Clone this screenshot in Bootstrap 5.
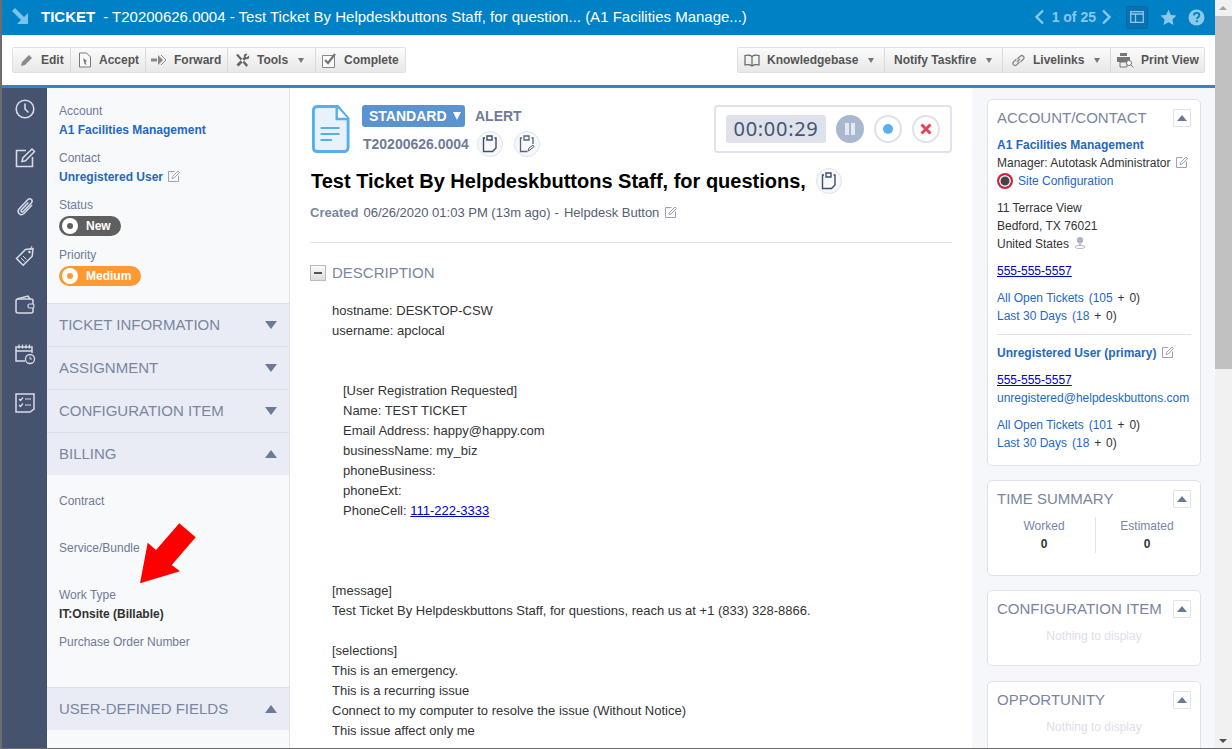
<!DOCTYPE html>
<html lang="en"><head><meta charset="utf-8"><title>Ticket</title>
<link href="https://cdn.jsdelivr.net/npm/bootstrap@5.3.0/dist/css/bootstrap.min.css" rel="stylesheet">
<style>
html,body{height:100%;overflow:hidden}
body{font:12px/18px "Liberation Sans",Arial,sans-serif;background:#6d6d6d;color:#333;padding-left:2px}
.shell{width:1230px;height:748px;position:relative;overflow:hidden}
.pagecol{width:1213px;height:100%;background:#fff}
.scrollcol{width:17px;background:#f1f1f1;position:relative}
.sc-thumb{background:#c1c1c1;height:353px;margin-top:16px}
.sc-up,.sc-dn{position:absolute;left:4px;width:0;height:0;border-left:4px solid transparent;border-right:4px solid transparent}
.sc-up{top:6px;border-bottom:4px solid #a3a3a3}.sc-dn{bottom:5px;border-top:4px solid #505050}
.titlebar{height:35px;background:#0081c6;color:#fff;font-size:15px;padding-bottom:1px}
.titlebar svg{display:block}
.tb-arrow{margin-left:10px;margin-right:11px}
.tb-name{font-weight:700;font-size:15px;margin-right:8px}
.tb-count{color:#8cc8ec;font-weight:700;font-size:14px;margin:0 5px 0 7px}
.layout-box{width:22px;height:23px;background:#0a72b0;border:1px solid #0a6aa5;border-radius:2px;margin:0 12px 0 15px}
.tb-help{margin-left:11px}
.tb-right{margin-right:10px}
.toolbar{height:53px;background:#fff;border-bottom:3px solid #2a85d6;padding:0 10px}
.tool-group.btn-group{height:26px;border:1px solid #e0e0e0;border-radius:2px;display:flex}
.tool-group.btn-group>.tool.btn{margin-left:0;flex:none;height:24px;background:linear-gradient(#fbfbfb,#e8e8e8);border:0;border-right:1px solid #d9d9d9;border-radius:0;padding:0 0 0 7px;font:700 12px/24px "Liberation Sans",Arial,sans-serif;color:#555;display:flex;align-items:center;justify-content:flex-start;gap:7px}
.tool-group.btn-group>.tool.btn:last-child{border-right:0}
.caret-mini{width:0;height:0;border-left:3.5px solid transparent;border-right:3.5px solid transparent;border-top:5px solid #777;margin-left:3px}
.tool-group.btn-group>.tool.btn.w-edit{width:58px}
.tool-group.btn-group>.tool.btn.w-accept{width:75px}
.tool-group.btn-group>.tool.btn.w-forward{width:82px;padding-left:5px}
.tool-group.btn-group>.tool.btn.w-tools{width:88px}
.tool-group.btn-group>.tool.btn.w-complete{width:89px;padding-left:6px}
.tool-group.btn-group>.tool.btn.w-know{width:147px;padding-left:6px}
.tool-group.btn-group>.tool.btn.w-notify{width:118px;padding-left:9px}
.tool-group.btn-group>.tool.btn.w-live{width:108px;padding-left:8px}
.tool-group.btn-group>.tool.btn.w-print{width:93px;padding-left:6px}
.workspace{height:660px;overflow:hidden}
.iconrail{width:45px;background:#46536f;padding-top:10px;flex:none}
.iconrail svg{display:block;margin:0 auto 27px;width:22px;height:22px}
.leftpanel{width:243px;flex:none;background:#f8f9fb;border-right:1px solid #e2e4ea;color:#6f7b98}
.field-top{padding:14px 12px 0;height:215px}
.lbl{color:#6f7b98;height:19px;line-height:19px}
.val{height:19px;line-height:19px;margin-bottom:9px}
.acct{color:#2468c4;font-weight:700}
.pill{height:20px;border-radius:10px;color:#fff;font-weight:700;display:inline-flex;align-items:center;margin:1px 0 0;padding-left:3px;line-height:20px}
.pill-dot{width:16px;height:16px;border-radius:50%;background:#fff;display:flex;align-items:center;justify-content:center;margin-right:8px}
.pill-dot i{width:6px;height:6px;border-radius:50%;display:block}
.pill-new{background:#5f5f5f;width:62px}.pill-new i{background:#5f5f5f}
.pill-med{background:#ff9a33;width:82px}.pill-med i{background:#ff9a33}
.statusbox{height:31px}
.sec-head{height:43px;background:#e9ecf4;border-top:1px solid #dcdfe8;padding:0 12px;font-size:15px;color:#7a86a0;display:flex;align-items:center;justify-content:space-between}
.tri-d,.tri-u{width:0;height:0;border-left:6.5px solid transparent;border-right:6.5px solid transparent}
.tri-d{border-top:8px solid #6b7a98}.tri-u{border-bottom:8px solid #6b7a98}
.billing{padding:17px 12px 0;height:212px}
.billing .fld{height:47px}
.billing .strong{color:#333;font-weight:700;height:19px;line-height:19px}
.centerpanel{width:682px;flex:none;padding:17px 20px 0;background:#fff}
.doc-ico{width:38px;height:48px;flex:none;margin-left:2px}
.hd-info{margin-left:12px}
.hd-top{height:52px}
.badge-std{background:#5a93cf;color:#fff;font-weight:700;font-size:14px;height:22px;line-height:22px;width:103px;border-radius:3px;padding-left:7px;display:flex;align-items:center}
.badge-tri{width:0;height:0;border-left:4.5px solid transparent;border-right:4.5px solid transparent;border-top:8px solid #fff;margin-left:6px}
.alert-lbl{color:#6f7b98;font-weight:700;font-size:14px;margin-left:10px;line-height:22px}
.tnum-row{margin-top:4px;height:26px}
.tnum{color:#6f7b98;font-weight:700;font-size:14px;width:115px;padding-left:1px}
.circ{width:26px;height:26px;border-radius:50%;border:1px solid #dfe2ea;background:#f7f8fa;display:flex;align-items:center;justify-content:center;margin-right:11px}
.circ-last{margin-right:0}
.timerbox{width:238px;height:48px;border:2px solid #e0e3eb;border-radius:4px;padding:8px 10px;gap:10px;margin-left:auto}
.clock{width:100px;height:28px;background:#dfe2ea;border-radius:3px;font:20px/28px "Noto Sans","Open Sans",sans-serif;color:#445571;text-align:center;letter-spacing:.7px}
.tcirc{width:28px;height:28px;border-radius:50%;display:flex;align-items:center;justify-content:center}
.tc-pause{background:#a9b7cf}.tc-ring{border:2px solid #dfe2ea;background:#fff}
.title-row{margin-top:11px;height:26px}
.bigtitle{font-size:20px;font-weight:700;color:#000;line-height:24px;margin:0 10px 0 1px}
.created{color:#555e72;margin-top:10px;line-height:18px;font-size:13px}
.created b{color:#7a86a0;margin-right:5px}
.sep{margin:0 5px 0 4px}
.rule{height:1px;background:#dfe1e6;margin:20px 0 0}
.desc-head{margin-top:20px;height:20px;font-size:15px;line-height:20px;color:#7a86a0;display:flex;align-items:center}
.minus{width:16px;height:16px;border:1px solid #bbb;background:linear-gradient(#fafafa,#ddd);margin-right:6px;display:flex;align-items:center;justify-content:center}
.minus i{display:block;width:8px;height:2px;background:#555}
.body-text{font-size:13px;line-height:20px;color:#333;margin:18px 0 0 22px}
.body-text div{min-height:20px}
.ind{padding-left:11px}
.rightpanel{flex:1;background:#f6f7fa;padding:11px 14px 0 15px}
.sidecard{background:#fff;border:1px solid #dfe2ea;border-radius:5px;padding:8px 9px 0;margin-bottom:14px;position:relative;color:#333}
.card-acct{height:367px}.card-time{height:96px}.card-cfg{height:76px;margin-bottom:15px}.card-opp{height:76px}
.sc-title{font-size:15px;line-height:20px;color:#7a86a0;height:20px}
.sc-toggle{position:absolute;right:9px;top:9px;width:18px;height:18px;background:#fff;border:1px solid #dfe2ea;display:flex;align-items:center;justify-content:center;border-radius:1px}
.sc-toggle i{display:block;width:0;height:0;border-left:5px solid transparent;border-right:5px solid transparent;border-bottom:6px solid #6b7a98}
.ln{height:18px;line-height:18px;white-space:nowrap}
.first-ln{margin-top:8px}
.lk{color:#2468c4}
.cnt{margin-left:5px;word-spacing:1.5px}
.ph{color:#0000c8;text-decoration:underline}
.gap9{margin-top:9px}
.sc-rule{height:1px;background:#dfe2ea;margin:9px 0}
.nothing{text-align:center;color:#dcdfe8;margin-top:8px;line-height:18px}
.time-row{margin:8px -9px 0 -9px}
.time-col{flex:1;text-align:center;padding-left:5px}
.time-col+.time-col{border-left:1px solid #dfe2ea;padding:0 2px 0 0}
.time-col span{display:block;line-height:18px;color:#7a86a0}
.time-col b{display:block;line-height:18px;color:#333}
.site-ring{width:16px;height:16px;border:2.5px solid #d5203c;border-radius:50%;background:#444;box-shadow:inset 0 0 0 1.5px #fff;margin-right:5px;flex:none}
.redarrow{position:absolute;left:136px;top:520px;width:62px;height:66px}
.editico{width:12px;height:12px;display:inline-block;vertical-align:-1px;margin-left:2px}
.pin{vertical-align:-1px;margin-left:2px}
</style></head><body>
<div class="shell d-flex">
<div class="pagecol d-flex flex-column">
 <div class="titlebar d-flex align-items-center flex-none">
  <svg class="tb-arrow" width="18" height="18" viewBox="0 0 18 18"><path d="M0 3L3 0l9 9 4-4v11H5l4-4z" fill="#7cc3ec"/></svg>
  <span class="tb-name">TICKET</span><span>- T20200626.0004 - Test Ticket By Helpdeskbuttons Staff, for question... (A1 Facilities Manage...)</span>
  <div class="d-flex align-items-center ms-auto tb-right">
   <svg width="10" height="16" viewBox="0 0 10 16"><path d="M8 1.500L1.500 8 8 14.500" fill="none" stroke="#8cc8ec" stroke-width="2.4"/></svg>
   <span class="tb-count">1 of 25</span>
   <svg width="10" height="16" viewBox="0 0 10 16"><path d="M2 1.500L8.500 8 2 14.500" fill="none" stroke="#8cc8ec" stroke-width="2.4"/></svg>
   <div class="layout-box d-flex align-items-center justify-content-center"><svg width="14" height="12" viewBox="0 0 14 12"><path d="M.7.7h12.6v10.6H.7zM.7 3h12.6M5.5 3v8" fill="none" stroke="#8cc8ec" stroke-width="1.3"/></svg></div>
   <svg width="17" height="17" viewBox="0 0 24 24"><path d="M12 1l3.4 7.3 7.9 1-5.8 5.4 1.5 7.9L12 18.7l-7 3.9 1.5-7.9L.7 9.3l7.9-1z" fill="#8cc8ec"/></svg>
   <svg class="tb-help" width="17" height="17" viewBox="0 0 17 17"><circle cx="8.5" cy="8.5" r="8" fill="#8cc8ec"/><path d="M5.8 6.4c.1-1.700 1.300-2.500 2.800-2.500 1.600 0 2.700.9 2.700 2.300 0 2-2.200 2-2.200 3.800" fill="none" stroke="#0081c6" stroke-width="1.900"/><rect x="7.900" y="11.200" width="2" height="2" fill="#0081c6"/></svg>
  </div>
 </div>
 <div class="toolbar d-flex align-items-center justify-content-between flex-none">
  <div class="tool-group btn-group">
   <button class="btn tool w-edit"><svg width="14" height="14" viewBox="0 0 14 14"><path d="M1 13l1-4 7-7 3 3-7 7z" fill="#8a8a8a"/></svg>Edit</button>
   <button class="btn tool w-accept"><svg width="14" height="16" viewBox="0 0 14 16"><path d="M1.500 1h7l4 4v10h-11z" fill="#f8f8f8" stroke="#777"/><path d="M5 6l4 3-1.500 1 1 3-2-1z" fill="#777"/></svg>Accept</button>
   <button class="btn tool w-forward"><svg width="16" height="10" viewBox="0 0 16 10"><path d="M0 3.500h6v3H0zM7 0l5 5-5 5z" fill="#888"/><path d="M10 0l5 5-5 5" fill="none" stroke="#888"/></svg>Forward</button>
   <button class="btn tool w-tools"><svg width="15" height="15" viewBox="0 0 15 15"><path d="M1 2l2-1 10 11-1.500 2zM14 2.500l-2.500 2-1-1 2-2.500C10 0 8 2 9 4L1.500 11.500 3.500 13.500 11 6c2 1 4-1 3-3.500z" fill="#666"/></svg>Tools<i class="caret-mini"></i></button>
   <button class="btn tool w-complete"><svg width="15" height="15" viewBox="0 0 15 15"><path d="M.5 2.500h12v12H.5z" fill="#fafafa" stroke="#888"/><path d="M3 7l3 3 7-9" fill="none" stroke="#777" stroke-width="2.200"/></svg>Complete</button>
  </div>
  <div class="tool-group btn-group">
   <button class="btn tool w-know"><svg width="16" height="13" viewBox="0 0 16 13"><path d="M8 2.500C6 1 3 1 1 1.500v9.500c2-.5 5-.5 7 1 2-1.500 5-1.500 7-1V1.500C13 1 10 1 8 2.500zm0 0V12" fill="none" stroke="#666" stroke-width="1.200"/></svg>Knowledgebase<i class="caret-mini"></i></button>
   <button class="btn tool w-notify">Notify Taskfire<i class="caret-mini"></i></button>
   <button class="btn tool w-live"><svg width="15" height="15" viewBox="0 0 15 15"><path d="M6 9l3-3M5.500 6L2.500 9c-1.500 1.500.5 4.500 3 3l3-3M9.500 9l3-3c1.500-2-1-4.500-3-3l-3 3" fill="none" stroke="#888" stroke-width="1.300"/></svg>Livelinks<i class="caret-mini"></i></button>
   <button class="btn tool w-print"><svg width="17" height="15" viewBox="0 0 17 15"><path d="M3 0h7v3H3zM0 4h13v5H0z" fill="#777"/><path d="M3 9h7v5H3z" fill="#eee" stroke="#777"/><circle cx="12" cy="10" r="2.500" fill="#fff" stroke="#777"/><path d="M14 12l2.500 2.500" stroke="#777"/></svg>Print View</button>
  </div>
 </div>
 <div class="workspace d-flex">
  <div class="iconrail">
   <svg viewBox="0 0 22 22"><circle cx="11" cy="11" r="8.800" fill="none" stroke="#d6dbe6" stroke-width="1.600"/><path d="M11 5.500V11l3.500 3.500" fill="none" stroke="#d6dbe6" stroke-width="1.600"/></svg>
   <svg viewBox="0 0 22 22"><path d="M12 3.500H2.500v16h16V10" fill="none" stroke="#d6dbe6" stroke-width="1.600"/><path d="M8 14.500l.8-3.500L18 2l2.500 2.500-9 9.300z" fill="none" stroke="#d6dbe6" stroke-width="1.500"/></svg>
   <svg viewBox="0 0 22 22"><path d="M18 9l-8 8.500c-3.500 3-7.500-1-5-4.500l9-9.500c2-2 5.500.5 3.500 3.200l-8.500 9c-1 1-2.700-.3-1.700-1.700l7-7.500" fill="none" stroke="#d6dbe6" stroke-width="1.500"/></svg>
   <svg viewBox="0 0 22 22"><path d="M2.500 13.500l9-9 7.500-.8-.8 7.500-9 9z" fill="none" stroke="#d6dbe6" stroke-width="1.500"/><circle cx="15.500" cy="7" r="1.300" fill="#d6dbe6"/><path d="M7 13l3.500 3.500M9 11l3.500 3.500" stroke="#d6dbe6"/><path d="M16 5l2-4" stroke="#d6dbe6"/></svg>
   <svg viewBox="0 0 22 22"><rect x="2" y="5" width="17" height="14" rx="2" fill="none" stroke="#d6dbe6" stroke-width="1.500"/><path d="M3 5l11-3 2 3" fill="none" stroke="#d6dbe6" stroke-width="1.500"/><rect x="14" y="10" width="6" height="4" rx="1.500" fill="#46536f" stroke="#d6dbe6" stroke-width="1.200"/></svg>
   <svg viewBox="0 0 22 22"><path d="M11 18H2V4h16v6" fill="none" stroke="#d6dbe6" stroke-width="1.500"/><path d="M2 8h16M5 1.500v4M8.500 1.500v4M12 1.500v4M15.500 1.500v4" stroke="#d6dbe6" stroke-width="1.300"/><circle cx="16" cy="16" r="4.500" fill="#46536f" stroke="#d6dbe6" stroke-width="1.300"/><path d="M16 13.500V16h2" fill="none" stroke="#d6dbe6"/></svg>
   <svg viewBox="0 0 22 22"><path d="M2 2h18v15l-4 3H2z" fill="none" stroke="#d6dbe6" stroke-width="1.500"/><path d="M5 7l1.500 1.500L9 5.500M5 13l1.500 1.500L9 11.500M11 7h6M11 13h6" fill="none" stroke="#d6dbe6" stroke-width="1.200"/></svg>
  </div>
  <div class="leftpanel">
   <div class="field-top">
    <div class="lbl">Account</div><div class="val acct">A1 Facilities Management</div>
    <div class="lbl">Contact</div><div class="val acct">Unregistered User <svg class="editico" viewBox="0 0 12 12"><path d="M6.500 1.500h-6v10h10v-6M4 8.500l.5-2L10 1l1.500 1.500L6 8z" fill="none" stroke="#9aa3b8"/></svg></div>
    <div class="lbl">Status</div><div class="statusbox"><span class="pill pill-new"><span class="pill-dot"><i></i></span>New</span></div>
    <div class="lbl">Priority</div><div><span class="pill pill-med"><span class="pill-dot"><i></i></span>Medium</span></div>
   </div>
   <div class="sec-head">TICKET INFORMATION<i class="tri-d"></i></div>
   <div class="sec-head">ASSIGNMENT<i class="tri-d"></i></div>
   <div class="sec-head">CONFIGURATION ITEM<i class="tri-d"></i></div>
   <div class="sec-head">BILLING<i class="tri-u"></i></div>
   <div class="billing">
    <div class="fld"><div class="lbl">Contract</div></div>
    <div class="fld"><div class="lbl">Service/Bundle</div></div>
    <div class="fld"><div class="lbl">Work Type</div><div class="strong">IT:Onsite (Billable)</div></div>
    <div class="fld"><div class="lbl">Purchase Order Number</div></div>
   </div>
   <div class="sec-head">USER-DEFINED FIELDS<i class="tri-u"></i></div>
  </div>
  <div class="centerpanel">
   <div class="d-flex hd-top">
    <svg class="doc-ico" viewBox="0 0 40 48" preserveAspectRatio="none"><path d="M5 1.500h22l11 12v29a4 4 0 0 1-4 4H5a4 4 0 0 1-3.500-4v-37a4 4 0 0 1 3.500-4z" fill="#e8f2fd" stroke="#56aeee" stroke-width="3"/><path d="M26 2v12h12" fill="#fff" stroke="#56aeee" stroke-width="2.500"/><path d="M9 23h20M9 29h20M9 35h12" stroke="#56aeee" stroke-width="2.200"/></svg>
    <div class="hd-info">
     <div class="d-flex"><div class="badge-std">STANDARD<i class="badge-tri"></i></div><div class="alert-lbl">ALERT</div></div>
     <div class="d-flex align-items-center tnum-row">
      <div class="tnum">T20200626.0004</div>
      <div class="circ"><svg width="16" height="18" viewBox="0 0 16 18"><path d="M3 3H1.500v13.500h9L14 13V3h-1.500" fill="none" stroke="#3f4e6b" stroke-width="1.400"/><path d="M5 1h5v4H5z" fill="#f7f8fa" stroke="#3f4e6b" stroke-width="1.400"/></svg></div>
      <div class="circ circ-last"><svg width="16" height="18" viewBox="0 0 16 18"><path d="M3 3H1.500v13.500h7M14 9V3h-1.500" fill="none" stroke="#566481" stroke-width="1.300"/><path d="M5 1h5v4H5z" fill="#f7f8fa" stroke="#566481" stroke-width="1.300"/><path d="M9 16l1-3 4-3 1 1.500-4 3.500z" fill="none" stroke="#566481"/></svg></div>
     </div>
    </div>
    <div class="timerbox d-flex align-items-center">
     <div class="clock">00:00:29</div>
     <div class="tcirc tc-pause"><svg width="12" height="14" viewBox="0 0 12 14"><path d="M1 1h4v12H1zM7 1h4v12H7z" fill="#e4e8f0"/></svg></div>
     <div class="tcirc tc-ring"><svg width="10" height="10" viewBox="0 0 10 10"><circle cx="5" cy="5" r="5" fill="#5aaeee"/></svg></div>
     <div class="tcirc tc-ring"><svg width="12" height="12" viewBox="0 0 12 12"><path d="M1.500 1.500l9 9M10.500 1.500l-9 9" stroke="#e8415a" stroke-width="3"/></svg></div>
    </div>
   </div>
   <div class="d-flex align-items-center title-row">
    <h1 class="bigtitle">Test Ticket By Helpdeskbuttons Staff, for questions,</h1>
    <div class="circ"><svg width="16" height="18" viewBox="0 0 16 18"><path d="M3 3H1.500v13.500h9L14 13V3h-1.500" fill="none" stroke="#3f4e6b" stroke-width="1.400"/><path d="M5 1h5v4H5z" fill="#f7f8fa" stroke="#3f4e6b" stroke-width="1.400"/></svg></div>
   </div>
   <div class="created"><b>Created</b>06/26/2020 01:03 PM (13m ago)<span class="sep">-</span>Helpdesk Button <svg class="editico" viewBox="0 0 12 12"><path d="M6.500 1.500h-6v10h10v-6M4 8.500l.5-2L10 1l1.500 1.500L6 8z" fill="none" stroke="#9aa3b8"/></svg></div>
   <div class="rule"></div>
   <div class="desc-head"><span class="minus"><i></i></span>DESCRIPTION</div>
   <div class="body-text">
    <div>hostname: DESKTOP-CSW</div><div>username: apclocal</div><div></div><div></div>
    <div class="ind">[User Registration Requested]</div><div class="ind">Name: TEST TICKET</div><div class="ind">Email Address: happy@happy.com</div><div class="ind">businessName: my_biz</div><div class="ind">phoneBusiness:</div><div class="ind">phoneExt:</div><div class="ind">PhoneCell: <span class="ph">111-222-3333</span></div>
    <div></div><div></div><div></div>
    <div>[message]</div><div>Test Ticket By Helpdeskbuttons Staff, for questions, reach us at +1 (833) 328-8866.</div><div></div>
    <div>[selections]</div><div>This is an emergency.</div><div>This is a recurring issue</div><div>Connect to my computer to resolve the issue (Without Notice)</div><div>This issue affect only me</div>
   </div>
  </div>
  <div class="rightpanel">
   <div class="sidecard card-acct">
    <div class="sc-title">ACCOUNT/CONTACT</div><span class="sc-toggle"><i></i></span>
    <div class="ln acct first-ln">A1 Facilities Management</div>
    <div class="ln">Manager: Autotask Administrator <svg class="editico" viewBox="0 0 12 12"><path d="M6.500 1.500h-6v10h10v-6M4 8.500l.5-2L10 1l1.500 1.500L6 8z" fill="none" stroke="#9aa3b8"/></svg></div>
    <div class="ln lk d-flex align-items-center"><i class="site-ring"></i>Site Configuration</div>
    <div class="ln gap9">11 Terrace View</div><div class="ln">Bedford, TX 76021</div>
    <div class="ln">United States <svg class="pin" width="12" height="13" viewBox="0 0 12 13"><circle cx="6" cy="4" r="3" fill="#aab2c4"/><path d="M6 9L3.500 5h5zM1 11c0-2 10-2 10 0s-10 2-10 0z" fill="none" stroke="#aab2c4"/></svg></div>
    <div class="ln gap9"><span class="ph">555-555-5557</span></div>
    <div class="ln gap9"><span class="lk">All Open Tickets</span><span class="cnt"><span class="lk">(105</span> + 0)</span></div>
    <div class="ln"><span class="lk">Last 30 Days</span><span class="cnt"><span class="lk">(18</span> + 0)</span></div>
    <div class="sc-rule"></div>
    <div class="ln acct">Unregistered User (primary) <svg class="editico" viewBox="0 0 12 12"><path d="M6.500 1.500h-6v10h10v-6M4 8.500l.5-2L10 1l1.500 1.500L6 8z" fill="none" stroke="#9aa3b8"/></svg></div>
    <div class="ln gap9"><span class="ph">555-555-5557</span></div>
    <div class="ln lk">unregistered@helpdeskbuttons.com</div>
    <div class="ln gap9"><span class="lk">All Open Tickets</span><span class="cnt"><span class="lk">(101</span> + 0)</span></div>
    <div class="ln"><span class="lk">Last 30 Days</span><span class="cnt"><span class="lk">(18</span> + 0)</span></div>
   </div>
   <div class="sidecard card-time">
    <div class="sc-title">TIME SUMMARY</div><span class="sc-toggle"><i></i></span>
    <div class="time-row d-flex"><div class="time-col"><span>Worked</span><b>0</b></div><div class="time-col"><span>Estimated</span><b>0</b></div></div>
   </div>
   <div class="sidecard card-cfg">
    <div class="sc-title">CONFIGURATION ITEM</div><span class="sc-toggle"><i></i></span>
    <div class="nothing">Nothing to display</div>
   </div>
   <div class="sidecard card-opp">
    <div class="sc-title">OPPORTUNITY</div><span class="sc-toggle"><i></i></span>
    <div class="nothing">Nothing to display</div>
   </div>
  </div>
 </div>
</div>
<div class="scrollcol flex-none"><i class="sc-up"></i><div class="sc-thumb"></div><i class="sc-dn"></i></div>
<svg class="redarrow" viewBox="0 0 62 66"><path d="M2 63.300L9.700 22.700 18 30 41.300 3.300 57.700 17.300 33.700 45 42 51.300z" fill="#f00"/></svg>
</div>
</body></html>
